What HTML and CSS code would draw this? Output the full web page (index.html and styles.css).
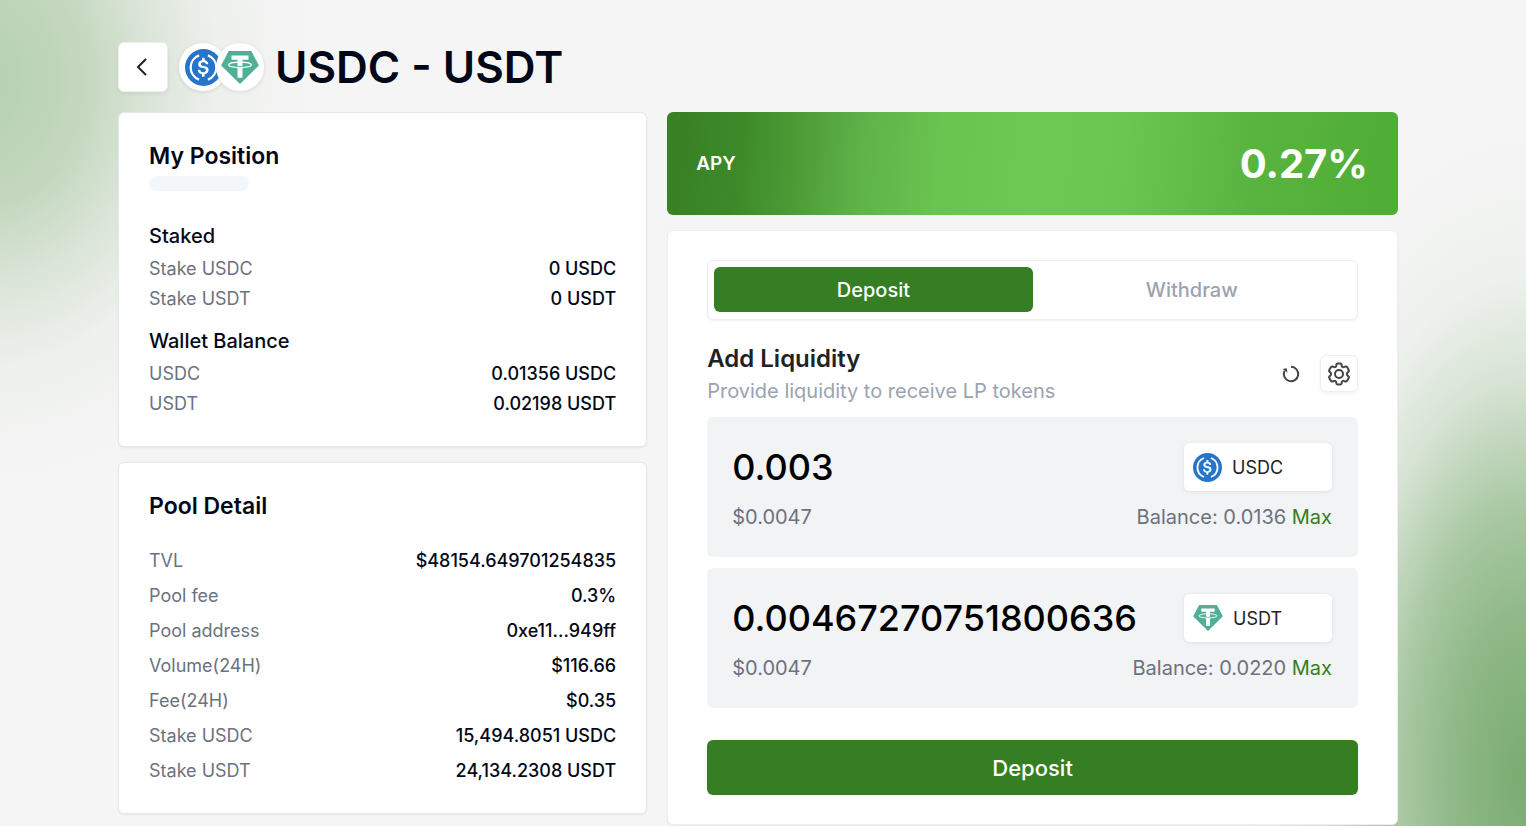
FILE: index.html
```html
<!DOCTYPE html>
<html lang="en">
<head>
  <meta charset="UTF-8">
  <meta name="viewport" content="width=device-width, initial-scale=1.0">
  <title>USDC - USDT Pool</title>
  <link rel="stylesheet" href="styles.css">
</head>
<body>
  <!-- Shared token icons -->
  <svg class="sprite" aria-hidden="true">
    <symbol id="icon-usdc" viewBox="0 0 32 32">
      <circle cx="16" cy="16" r="16" fill="#2775ca"/>
      <path fill="#fff" d="M20.4 18.2c0-2.3-1.4-3.1-4.2-3.5-2-.3-2.4-.8-2.4-1.7s.7-1.5 2-1.5c1.2 0 1.9.4 2.2 1.4.1.2.3.3.5.3h1.1c.3 0 .5-.2.5-.5v-.1c-.3-1.5-1.5-2.7-3.1-2.8V8.1c0-.3-.2-.5-.6-.5h-1c-.3 0-.5.2-.6.5v1.6c-2.1.3-3.4 1.7-3.4 3.4 0 2.2 1.3 3.1 4.1 3.4 1.9.3 2.5.7 2.5 1.8s-1 1.8-2.2 1.8c-1.8 0-2.4-.7-2.6-1.7-.1-.3-.3-.4-.5-.4h-1.1c-.3 0-.5.2-.5.5v.1c.3 1.7 1.4 2.9 3.6 3.2v1.7c0 .3.2.5.6.5h1c.3 0 .5-.2.6-.5v-1.7c2.1-.3 3.5-1.8 3.5-3.6z"/>
      <path fill="none" stroke="#fff" stroke-width="2" d="M12.2 5.5a11.2 11.2 0 0 0 0 21M19.8 5.5a11.2 11.2 0 0 1 0 21"/>
    </symbol>
    <symbol id="icon-usdt" viewBox="0 0 32 28">
      <path fill="#50af95" d="M6.4 0h19.2L32 12.2 16 28 0 12.2z"/>
      <path fill="#fff" d="M8.8 3.9h14.4v3.5h-5.1v15.2h-4.2V7.4H8.8z"/>
      <ellipse cx="16" cy="11.7" rx="9.7" ry="2.3" fill="none" stroke="#fff" stroke-width="1"/>
      <path stroke="#50af95" stroke-width=".8" fill="none" d="M13.9 13.2c1.4.1 2.8.1 4.2 0"/>
    </symbol>
  </svg>

  <div class="container">
    <!-- Header -->
    <header>
      <button class="back-btn" aria-label="Back">
        <svg width="24" height="24" viewBox="0 0 24 24"><path d="M15 4 7 12l8 8"/></svg>
      </button>
      <div class="token-pair">
        <span class="token"><svg width="37" height="37"><use href="#icon-usdc"/></svg></span>
        <span class="token"><svg width="38" height="33"><use href="#icon-usdt"/></svg></span>
      </div>
      <h1>USDC - USDT</h1>
    </header>

    <main>
      <div class="column">
        <!-- My Position -->
        <section class="card position">
          <h2>My Position</h2>
          <div class="skeleton"></div>
          <h3>Staked</h3>
          <dl>
            <div><dt>Stake USDC</dt><dd>0 USDC</dd></div>
            <div><dt>Stake USDT</dt><dd>0 USDT</dd></div>
          </dl>
          <h3>Wallet Balance</h3>
          <dl>
            <div><dt>USDC</dt><dd>0.01356 USDC</dd></div>
            <div><dt>USDT</dt><dd>0.02198 USDT</dd></div>
          </dl>
        </section>

        <!-- Pool Detail -->
        <section class="card pool">
          <h2>Pool Detail</h2>
          <dl>
            <div><dt>TVL</dt><dd>$48154.649701254835</dd></div>
            <div><dt>Pool fee</dt><dd>0.3%</dd></div>
            <div><dt>Pool address</dt><dd>0xe11...949ff</dd></div>
            <div><dt>Volume(24H)</dt><dd>$116.66</dd></div>
            <div><dt>Fee(24H)</dt><dd>$0.35</dd></div>
            <div><dt>Stake USDC</dt><dd>15,494.8051 USDC</dd></div>
            <div><dt>Stake USDT</dt><dd>24,134.2308 USDT</dd></div>
          </dl>
        </section>
      </div>

      <div class="column">
        <!-- APY banner -->
        <section class="apy">
          <span>APY</span>
          <strong>0.27%</strong>
        </section>

        <!-- Liquidity form -->
        <section class="liquidity">
          <div class="tabs">
            <button class="tab active">Deposit</button>
            <button class="tab">Withdraw</button>
          </div>

          <div class="liquidity-header">
            <div>
              <h2>Add Liquidity</h2>
              <p>Provide liquidity to receive LP tokens</p>
            </div>
            <div class="actions">
              <button class="refresh-btn" aria-label="Refresh">
                <svg width="20" height="20" viewBox="0 0 20 20"><path d="M10 2.8a7.2 7.2 0 1 1-6.4 4"/><path class="arrow" d="M1.6 5 5.8 4.2l.6 4.2z"/></svg>
              </button>
              <button class="settings-btn" aria-label="Settings">
                <svg width="24" height="24" viewBox="0 0 24 24"><path d="M9.3 4V3a1.5 1.5 0 0 1 1.5-1.5h2.4A1.5 1.5 0 0 1 14.7 3v1c.4 1.2 1.8 1.5 2.8.8a2 2 0 0 1 2.800.6l1.200 2a2 2 0 0 1-.6 2.700c-1.300.9-1.300 2.900 0 3.800a2 2 0 0 1 .6 2.700l-1.200 2a2 2 0 0 1-2.800.6c-1-.7-2.400-.4-2.800.8v1a1.500 1.500 0 0 1-1.500 1.500h-2.400A1.500 1.500 0 0 1 9.300 21v-1c-.4-1.200-1.800-1.500-2.800-.8a2 2 0 0 1-2.800-.6l-1.200-2a2 2 0 0 1 .6-2.700c1.300-.9 1.300-2.900 0-3.800a2 2 0 0 1-.6-2.700l1.200-2a2 2 0 0 1 2.800-.6c1 .7 2.400.4 2.800-.8z"/><circle cx="12" cy="12" r="4"/></svg>
              </button>
            </div>
          </div>

          <div class="amount-box">
            <div class="amount-row">
              <input type="text" value="0.003" aria-label="USDC amount">
              <button class="token-select"><svg width="29" height="29"><use href="#icon-usdc"/></svg>USDC</button>
            </div>
            <div class="amount-row info">
              <span>$0.0047</span>
              <span>Balance: 0.0136 <button class="max-btn">Max</button></span>
            </div>
          </div>

          <div class="amount-box">
            <div class="amount-row">
              <input type="text" value="0.00467270751800636" aria-label="USDT amount">
              <button class="token-select"><svg width="30" height="26"><use href="#icon-usdt"/></svg>USDT</button>
            </div>
            <div class="amount-row info">
              <span>$0.0047</span>
              <span>Balance: 0.0220 <button class="max-btn">Max</button></span>
            </div>
          </div>

          <button class="submit-btn">Deposit</button>
        </section>
      </div>
    </main>
  </div>
</body>
</html>
```
FILE: styles.css
```css
:root {
  --primary: #357e23;
  --text-dark: #020817;
  --text-gray: #6b7280;
  --text-light: #9ca3af;
  --border: #e2e8f0;
  --shadow: 0 1px 2px rgba(0, 0, 0, 0.06);
}

* {
  box-sizing: border-box;
}

body {
  margin: 0;
  padding: 0 10px 0 0;
  min-height: 100vh;
  font-family: Inter, "Liberation Sans", sans-serif;
  font-size: 18px;
  color: var(--text-dark);
  background:
    radial-gradient(ellipse 330px 400px at -20px 80px, #b4cfae 0%, #c4d8bf 32%, rgba(215, 226, 212, 0.85) 52%, rgba(232, 237, 231, 0.6) 72%, rgba(245, 245, 245, 0) 100%) no-repeat,
    radial-gradient(ellipse 300px 640px at 100% 94%, #7aab70 0%, #8fb988 25%, #a9c8a3 42%, rgba(210, 224, 207, 0.85) 62%, rgba(232, 238, 231, 0.6) 78%, rgba(245, 245, 245, 0) 100%) no-repeat,
    #f5f5f5;
}

h1, h2, h3, p, dl, dd {
  margin: 0;
}

button {
  font-family: inherit;
  border: none;
  padding: 0;
  background: none;
  cursor: pointer;
}

.sprite {
  position: absolute;
  width: 0;
  height: 0;
}

.container {
  max-width: 1280px;
  margin: 0 auto;
  padding-top: 42px;
}

/* Header */
header {
  display: flex;
  align-items: center;
  gap: 11px;
  margin-bottom: 20px;
}

header h1 {
  font-size: 44px;
  font-weight: 600;
  line-height: 50px;
}

.back-btn {
  display: flex;
  align-items: center;
  justify-content: center;
  width: 50px;
  height: 50px;
  background: #fff;
  border: 1px solid #eee;
  border-radius: 6px;
  box-shadow: 0 2px 4px rgba(0, 0, 0, 0.06);
}

.back-btn svg {
  fill: none;
  stroke: #222;
  stroke-width: 2;
}

.token-pair {
  display: flex;
}

.token {
  display: flex;
  align-items: center;
  justify-content: center;
  width: 48px;
  height: 48px;
  background: #fff;
  border-radius: 50%;
  box-shadow: 0 1px 4px rgba(0, 0, 0, 0.1);
}

.token + .token {
  margin-left: -11px;
}

/* Columns */
main {
  display: grid;
  grid-template-columns: 42fr 58fr;
  gap: 20px;
  align-items: start;
}

.column {
  display: flex;
  flex-direction: column;
  gap: 15px;
  min-width: 0;
}

.card {
  padding: 28px 30px;
  background: #fff;
  border: 1px solid var(--border);
  border-radius: 6px;
  box-shadow: var(--shadow);
}

h2 {
  font-size: 24px;
  font-weight: 600;
  line-height: 30px;
}

.card h2 {
  font-size: 23px;
}

h3 {
  font-size: 20px;
  font-weight: 500;
  line-height: 30px;
}

dl div {
  display: flex;
  align-items: center;
  justify-content: space-between;
  height: 30px;
}

dt {
  color: var(--text-gray);
}

dd {
  font-weight: 500;
}

.skeleton {
  width: 100px;
  height: 15px;
  margin: 5px 0 30px;
  background: #f3f7fa;
  border-radius: 8px;
}

.position dl {
  padding: 2px 0 13px;
}

.position dl:last-child {
  padding-bottom: 0;
}

.pool {
  padding-bottom: 25px;
}

.pool dl {
  padding-top: 22px;
}

.pool dl div {
  height: 35px;
}

/* APY banner */
.apy {
  display: flex;
  align-items: center;
  justify-content: space-between;
  height: 103px;
  padding: 0 30px 0 29px;
  color: #fff;
  font-size: 19px;
  font-weight: 600;
  border-radius: 6px;
  background: linear-gradient(95deg, #378024 0%, #3d8929 10%, #4c9b36 18%, #5fb349 27%, #69c34f 37%, #6dc853 50%, #6ac651 62%, #58b43e 80%, #4fac34 100%);
}

.apy strong {
  font-size: 40px;
  font-weight: 700;
}

/* Liquidity form */
.liquidity {
  padding: 29px 39px;
  background: #fff;
  border: 1px solid #eee;
  border-radius: 6px;
  box-shadow: var(--shadow);
}

.tabs {
  display: flex;
  height: 60px;
  padding: 6px 6px 7px;
  border: 1px solid #eee;
  border-radius: 6px;
  box-shadow: var(--shadow);
}

.tab {
  flex: 1;
  font-size: 20px;
  font-weight: 500;
  color: var(--text-light);
  border-radius: 6px;
}

.tab.active {
  color: #fff;
  background: var(--primary);
}

.liquidity-header {
  display: flex;
  align-items: flex-start;
  justify-content: space-between;
  margin: 23px 0 10px;
}

.liquidity-header h2 {
  color: #222;
  line-height: 32px;
}

.liquidity-header p {
  font-size: 20px;
  line-height: 32px;
  color: var(--text-light);
}

.actions {
  display: flex;
  align-items: center;
  gap: 19px;
  padding-top: 12px;
}

.actions button {
  display: flex;
  align-items: center;
  justify-content: center;
}

.actions svg {
  fill: none;
  stroke: #444;
  stroke-width: 2;
  stroke-linejoin: round;
}

.actions .arrow {
  fill: #444;
  stroke: none;
}

.settings-btn {
  width: 38px;
  height: 37px;
  border: 1px solid #eee;
  border-radius: 6px;
  box-shadow: 0 2px 4px rgba(0, 0, 0, 0.05);
}

.amount-box {
  height: 140px;
  margin-bottom: 11px;
  padding: 26px 26px 0 25px;
  background: #f2f3f5;
  border-radius: 6px;
}

.amount-row {
  display: flex;
  align-items: center;
  justify-content: space-between;
}

.amount-row input {
  flex: 1;
  min-width: 0;
  height: 48px;
  padding: 0;
  font-family: inherit;
  font-size: 36px;
  font-weight: 500;
  color: #000;
  border: none;
  outline: none;
  background: none;
}

.token-select {
  display: flex;
  align-items: center;
  gap: 10px;
  width: 148px;
  height: 48px;
  padding-left: 9px;
  font-size: 18px;
  color: #222;
  background: #fff;
  border-radius: 6px;
  box-shadow: 0 1px 4px rgba(0, 0, 0, 0.08);
}

.info {
  margin-top: 10px;
  font-size: 20px;
  line-height: 32px;
  color: var(--text-gray);
}

.max-btn {
  font-size: 20px;
  color: var(--primary);
}

.submit-btn {
  display: block;
  width: 100%;
  height: 55px;
  margin-top: 32px;
  font-size: 22px;
  font-weight: 500;
  color: #fff;
  background: var(--primary);
  border-radius: 6px;
}
```
